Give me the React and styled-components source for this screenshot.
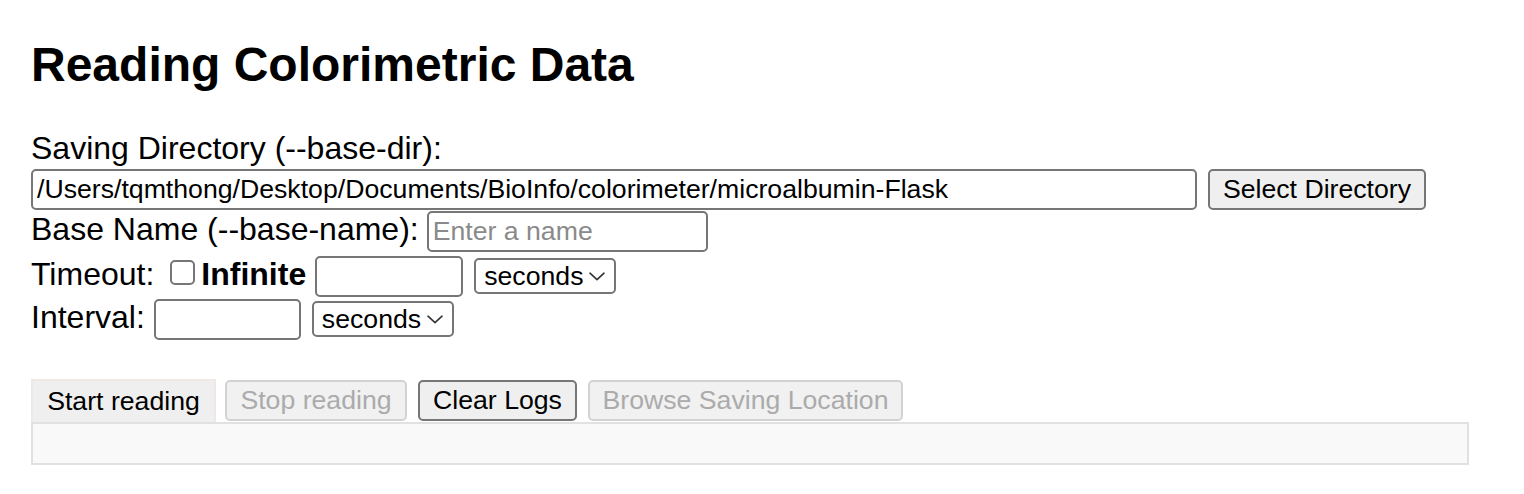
import React from 'react';
import styled, { createGlobalStyle } from 'styled-components';

const GlobalStyle = createGlobalStyle`
  body {
    margin: 0;
    background: #fff;
    color: #000;
    font-family: "Liberation Sans", Arial, Helvetica, sans-serif;
  }
`;

const Page = styled.div`
  padding: 37px 55px 20px 31px;
`;

const Title = styled.h2`
  font-size: 48px;
  font-weight: bold;
  margin: 0;
`;

const FieldLabel = styled.div`
  font-size: 32px;
  margin-top: 38px;
`;

const Row = styled.div`
  display: flex;
  align-items: ${(p) => p.$align || 'baseline'};
  margin-top: ${(p) => p.$mt || 0}px;
`;

const Label = styled.span`
  font-size: 32px;
  font-weight: ${(p) => (p.$bold ? 'bold' : 'normal')};
  margin-left: ${(p) => p.$ml || 0}px;
  white-space: nowrap;
`;

const TextInput = styled.input`
  box-sizing: border-box;
  width: ${(p) => p.$w}px;
  height: 41px;
  margin: 0 0 0 ${(p) => p.$ml || 0}px;
  padding: 2px 4px;
  border: 2px solid #767676;
  border-radius: 5px;
  font-family: inherit;
  font-size: 26.67px;
  color: #000;
  background: #fff;
  outline: none;
  &::placeholder {
    color: #8a8a8a;
  }
`;

const Check = styled.input`
  appearance: none;
  box-sizing: border-box;
  width: 25px;
  height: 25px;
  margin: 0 0 0 ${(p) => p.$ml || 0}px;
  border: 2px solid #767676;
  border-radius: 5px;
  background: #fff;
`;

const Dropdown = styled.span`
  box-sizing: border-box;
  display: inline-flex;
  align-items: center;
  justify-content: space-between;
  width: 142px;
  height: 36px;
  margin-left: ${(p) => p.$ml || 0}px;
  padding: 0 9px 0 8px;
  border: 2px solid #767676;
  border-radius: 5px;
  background: #fff;
  svg {
    flex: none;
  }
`;

const Select = styled.select`
  appearance: none;
  border: 0;
  padding: 0;
  margin: 0;
  background: transparent;
  font-family: inherit;
  font-size: 26.67px;
  color: #000;
  outline: none;
`;

const Button = styled.button`
  box-sizing: border-box;
  width: ${(p) => p.$w}px;
  height: 41px;
  margin: 0 0 0 ${(p) => p.$ml || 0}px;
  padding: 0;
  border: 2px solid ${(p) => (p.disabled ? '#d2d2d2' : '#767676')};
  border-radius: 5px;
  background: ${(p) => (p.disabled ? '#f1f1f1' : '#efefef')};
  color: ${(p) => (p.disabled ? '#ababab' : '#000')};
  font-family: inherit;
  font-size: 26.67px;
  white-space: nowrap;
`;

const TabButton = styled.button`
  box-sizing: border-box;
  width: 185px;
  height: 43px;
  margin: 0;
  padding: 0;
  border: 2px solid #f0e8e5;
  border-bottom: 0;
  background: #efefef;
  color: #000;
  font-family: inherit;
  font-size: 26.67px;
`;

const Actions = styled.div`
  display: flex;
  align-items: flex-start;
  margin-top: 39px;
  ${Button} {
    margin-top: 1px;
  }
`;

const LogBox = styled.div`
  box-sizing: border-box;
  height: 43px;
  border: 2px solid #e1e1e1;
  background: #f9f9f9;
`;

const Chevron = () => (
  <svg width="16" height="9" viewBox="0 0 16 9" fill="none">
    <path d="M1 1.2 L8 7.6 L15 1.2" stroke="#333" strokeWidth="1.6" strokeLinecap="round" strokeLinejoin="round" />
  </svg>
);

const UnitSelect = ({ ml }) => (
  <Dropdown $ml={ml}>
    <Select defaultValue="seconds">
      <option value="seconds">seconds</option>
      <option value="minutes">minutes</option>
      <option value="hours">hours</option>
    </Select>
    <Chevron />
  </Dropdown>
);

export default function App() {
  const [baseDir] = React.useState('/Users/tqmthong/Desktop/Documents/BioInfo/colorimeter/microalbumin-Flask');

  return (
    <>
      <GlobalStyle />
      <Page>
        <Title>Reading Colorimetric Data</Title>

        <FieldLabel>Saving Directory (--base-dir):</FieldLabel>
        <Row $align="center" $mt={2}>
          <TextInput $w={1166} value={baseDir} readOnly />
          <Button $w={218} $ml={11}>Select Directory</Button>
        </Row>

        <Row $mt={1}>
          <Label>Base Name (--base-name):</Label>
          <TextInput $w={281} $ml={8} placeholder="Enter a name" />
        </Row>

        <Row $mt={4}>
          <Label>Timeout:</Label>
          <Check type="checkbox" $ml={16} />
          <Label $bold $ml={6}>Infinite</Label>
          <TextInput $w={148} $ml={9} />
          <UnitSelect ml={11} />
        </Row>

        <Row $mt={2}>
          <Label>Interval:</Label>
          <TextInput $w={147} $ml={9} />
          <UnitSelect ml={11} />
        </Row>

        <Actions>
          <TabButton>Start reading</TabButton>
          <Button $w={182} $ml={9} disabled>Stop reading</Button>
          <Button $w={159} $ml={11}>Clear Logs</Button>
          <Button $w={315} $ml={11} disabled>Browse Saving Location</Button>
        </Actions>
        <LogBox />
      </Page>
    </>
  );
}
